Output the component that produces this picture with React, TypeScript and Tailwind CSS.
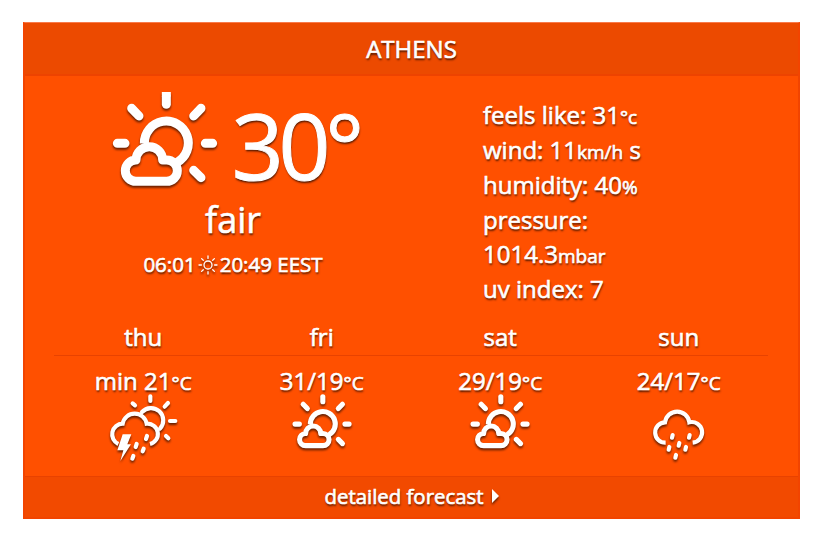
import type { ReactNode } from "react";

const iconShadow = "overflow-visible drop-shadow-[0.5px_2px_1px_rgba(50,15,0,0.75)]";

function FairIcon({ large = false }: { large?: boolean }) {
  return (
    <svg
      viewBox="36 36 320 284"
      className={`${iconShadow} ${large ? "w-[106.67px] h-[94.67px]" : "w-[60.5px] h-[53.7px]"}`}
      fill="none"
      stroke="white"
      strokeWidth="27"
      strokeLinecap="round"
      strokeLinejoin="round"
    >
      {large ? <path d="M199 36V50" strokeLinecap="butt" /> : null}
      <path d={large ? "M199 50V73" : "M199 45V72"} />
      <path d="M95 85L117 108M303 85L281 108M52 190H75M316 190H338M281 271L303 293" />
      <path d="M133 190A66 66 0 1 1 231 247" strokeLinecap="butt" />
      <path d="M108 304H200A32 32 0 0 0 200 240H188A40 40 0 0 0 108 240A32 32 0 0 0 108 304Z" />
    </svg>
  );
}

function StormIcon() {
  return (
    <svg viewBox="84 236 214 204" className={`${iconShadow} w-[71.33px] h-[68px]`} fill="none" stroke="white" strokeWidth="12.5" strokeLinecap="round">
      <path d="M211 243V257M264 263L254 274M270 317H286M258 362L265 369M158 264L165 270" />
      <path d="M186 290A36 36 0 0 1 240 340" />
      <path d="M115 386A32 32 0 0 1 128 325A36.6 36.6 0 0 1 200 325A31 31 0 0 1 210 386" strokeLinecap="butt" />
      <path d="M201 362L198 371M170 386L167 395M191 400L188 408M160 422L157 430" />
      <path d="M128 357H154L142 387H153L121 437L130 405H112Z" fill="white" stroke="none" />
    </svg>
  );
}

function RainIcon() {
  return (
    <svg viewBox="96 282 162 160" className={`${iconShadow} w-[54px] h-[53.33px]`} fill="none" stroke="white" strokeWidth="12.5" strokeLinecap="round">
      <path d="M137 386A30.5 30.5 0 0 1 135 325A36.8 36.8 0 0 1 208 325A31 31 0 1 1 218 386" strokeLinecap="butt" />
      <path d="M158 363L156 371M209 363L207 371M178 387L176 395M148 399L146 407M198 399L196 407M168 423L166 431" />
    </svg>
  );
}

function TinySun() {
  return (
    <svg viewBox="0 0 20 20" className={`${iconShadow} w-5 h-5`} fill="none" stroke="white" strokeWidth="1.3" strokeLinecap="round">
      <circle cx="10" cy="10" r="4" />
      <path d="M10 1V3.4M10 16.6V19M1 10H3.4M16.6 10H19M3.6 3.6L5.3 5.3M14.7 14.7L16.4 16.4M3.6 16.4L5.3 14.7M14.7 5.3L16.4 3.6" />
    </svg>
  );
}

function Unit({ children }: { children: ReactNode }) {
  return <span className="text-[19px]">{children}</span>;
}

const days = [
  { name: "thu", temp: "min 21", icon: <StormIcon />, iconMargin: "-mt-[4px]" },
  { name: "fri", temp: "31/19", icon: <FairIcon />, iconMargin: "-mt-[3px]" },
  { name: "sat", temp: "29/19", icon: <FairIcon />, iconMargin: "-mt-[3px]" },
  { name: "sun", temp: "24/17", icon: <RainIcon />, iconMargin: "mt-[10px]" },
];

export default function App() {
  return (
    <div className="h-[542px] w-[826px] overflow-hidden bg-white pl-[23px] pt-[22px] font-['Open_Sans',sans-serif] text-white [-webkit-text-stroke:0.65px_white] [text-shadow:0.5px_2px_2px_rgba(50,15,0,0.85)]">
      <div className="flex h-[497px] w-[777px] flex-col border-2 border-t border-[#f24400] border-t-[#f97a4a] bg-[#ff5000]">
        <header className="flex h-[53px] items-center justify-center border-b-2 border-[#ed4300] bg-[#ec4a00] text-2xl leading-none">
          ATHENS
        </header>

        <section className="flex h-[244px]">
          <div className="flex w-[430px] flex-col items-center">
            <div className="mt-4 flex h-24 w-full items-start pl-[87px]">
              <FairIcon large />
              <span className="ml-[13px] mt-[7px] text-[91px] leading-[92px] tracking-[-5.2px] [-webkit-text-stroke:1px_white]">30°</span>
            </div>
            <div className="-ml-[14px] mt-[8px] text-4xl leading-[48px]">fair</div>
            <div className="-ml-[14px] mt-[4px] flex h-[34px] items-center gap-[2px] text-[20.5px] leading-none">
              <span className="pb-[2px]">06:01</span>
              <TinySun />
              <span className="pb-[2px]">20:49 EEST</span>
            </div>
          </div>
          <div className="ml-[28px] mt-[22px] text-2xl leading-[34.8px]">
            <p className="h-[34.9px]">feels like: 31<Unit>°c</Unit></p>
            <p className="h-[34.9px]">wind: 11<Unit>km/h</Unit> s</p>
            <p className="h-[34.9px]">humidity: 40<Unit>%</Unit></p>
            <p className="h-[34.8px]">pressure:</p>
            <p className="h-[34.8px]">1014.3<Unit>mbar</Unit></p>
            <p className="h-[34.8px]">uv index: 7</p>
          </div>
        </section>

        <section className="ml-[29px] grid h-[156px] w-[714px] grid-cols-4">
          {days.map((day) => (
            <div key={day.name} className="flex flex-col items-center">
              <div className="flex h-[36px] w-full shrink-0 items-center justify-center border-b border-[#e84200] pb-[2px] text-2xl leading-none">
                {day.name}
              </div>
              <div className="mt-[8px] h-[34px] shrink-0 whitespace-nowrap text-2xl leading-[34px]">
                {day.temp}<Unit>°C</Unit>
              </div>
              <div className={day.iconMargin}>{day.icon}</div>
            </div>
          ))}
        </section>

        <footer className="flex flex-1 items-center justify-center gap-2 border-t border-[#e84200] bg-[#f24a00] pb-[2px] text-[20.4px] leading-none">
          <span>detailed forecast</span>
          <svg viewBox="0 0 7 14" className={`${iconShadow} h-[14px] w-[7px]`}>
            <path d="M0 0L7 7L0 14Z" fill="white" />
          </svg>
        </footer>
      </div>
    </div>
  );
}
